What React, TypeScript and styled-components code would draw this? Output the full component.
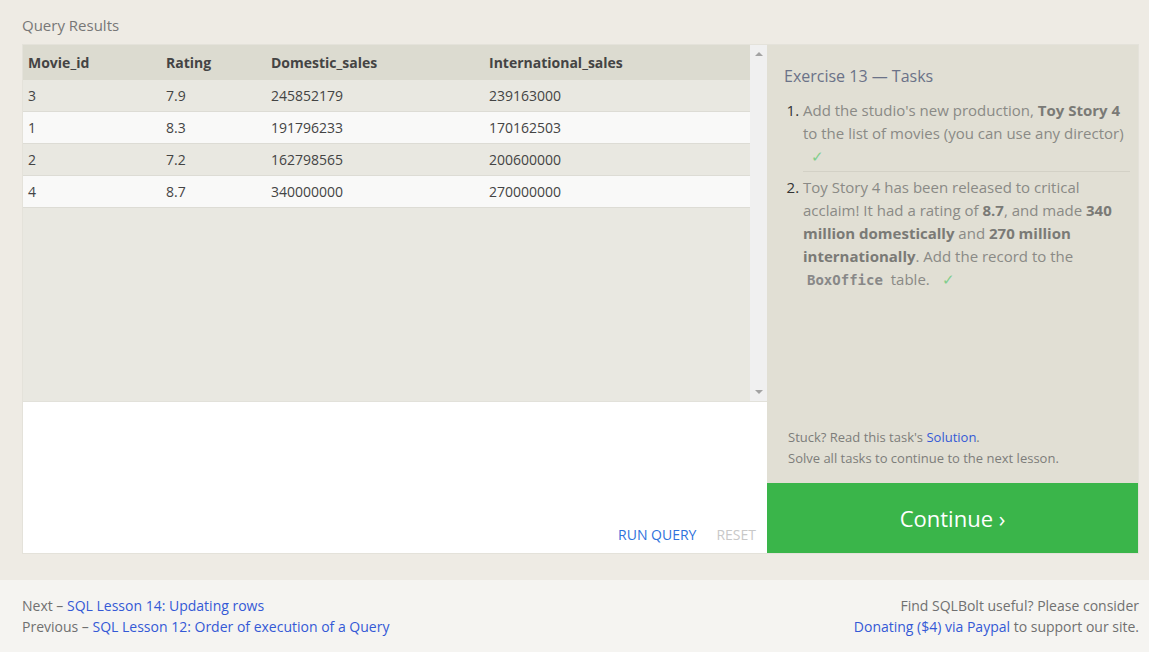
import React from "react";
import styled, { createGlobalStyle } from "styled-components";

const Global = createGlobalStyle`
  html, body { margin: 0; padding: 0; }
  body {
    background: #eeebe4;
    font-family: "Open Sans", "Noto Sans", sans-serif;
    color: #555;
  }
`;

const Page = styled.div`
  display: flex;
  flex-direction: column;
  min-height: 652px;
`;

const Main = styled.main`
  padding: 14px 10px 26px 22px;
`;

const SectionLabel = styled.div`
  font-size: 15px;
  line-height: 22px;
  color: #777;
  margin-bottom: 8px;
`;

const Panel = styled.div`
  display: grid;
  grid-template-columns: 1fr 371px;
  height: 510px;
  border: 1px solid #e4e2da;
  box-sizing: border-box;
`;

const LeftCol = styled.div`
  display: flex;
  flex-direction: column;
  min-width: 0;
`;

const TableArea = styled.div`
  display: flex;
  height: 356px;
  background: #e9e8e1;
`;

const TableScroll = styled.div`
  flex: 1;
  overflow: hidden;
`;

const Table = styled.table`
  width: 100%;
  border-collapse: collapse;
  font-size: 14px;
  table-layout: fixed;
`;

const Th = styled.th<{ $w?: number }>`
  text-align: left;
  font-weight: 700;
  color: #444;
  background: #dcdbd0;
  height: 35px;
  padding: 0 5px;
  width: ${(p) => (p.$w ? `${p.$w}px` : "auto")};
`;

const Tr = styled.tr<{ $alt: boolean }>`
  background: ${(p) => (p.$alt ? "#f9f9f8" : "#e9e8e1")};
  border-bottom: 1px solid #dddcd5;
`;

const Td = styled.td`
  height: 31px;
  padding: 0 5px;
  color: #444;
`;

const Scrollbar = styled.div`
  width: 17px;
  background: #f0f0f0;
  display: flex;
  flex-direction: column;
  justify-content: space-between;
  align-items: center;
  padding: 7px 0;
  box-sizing: border-box;
`;

const Arrow = styled.div<{ $down?: boolean }>`
  width: 0;
  height: 0;
  border-left: 4px solid transparent;
  border-right: 4px solid transparent;
  ${(p) =>
    p.$down
      ? "border-top: 4px solid #a3a3a3;"
      : "border-bottom: 4px solid #a3a3a3;"}
`;

const Editor = styled.div`
  flex: 1;
  background: #fff;
  border-top: 1px solid #e2e1da;
  display: flex;
  align-items: flex-end;
  justify-content: flex-end;
  padding: 0 11px 8px 0;
  gap: 20px;
`;

const EditorButton = styled.span<{ $disabled?: boolean }>`
  font-size: 14px;
  line-height: 20px;
  color: ${(p) => (p.$disabled ? "#c8c8c8" : "#2f72dc")};
  text-transform: uppercase;
`;

const RightCol = styled.div`
  background: #e1dfd4;
  display: flex;
  flex-direction: column;
`;

const Tasks = styled.div`
  flex: 1;
  padding: 20px 8px 0 17px;
  display: flex;
  flex-direction: column;
`;

const TaskTitle = styled.div`
  font-size: 16px;
  line-height: 22px;
  color: #6b7288;
  margin-bottom: 12px;
`;

const TaskList = styled.ol`
  margin: 0;
  padding: 0 0 0 19px;
`;

const TaskItem = styled.li`
  font-size: 15px;
  line-height: 23px;
  color: #8a8a86;
  padding: 0 0 3px 0;
  &::marker { color: #333; }
  & + & { border-top: 1px solid #d3d1c6; padding-top: 4px; }
`;

const B = styled.b`
  color: #7a7a76;
`;

const Code = styled.code`
  font-family: "DejaVu Sans Mono", "Liberation Mono", monospace;
  font-weight: 700;
  color: #888;
  font-size: 14px;
  padding: 0 4px;
`;

const Check = styled.span`
  color: #7fce8c;
  margin-left: 8px;
`;

const Help = styled.div`
  padding: 0 17px 14px 21px;
  font-size: 13px;
  line-height: 21px;
  color: #7d7d7a;
`;

const Link = styled.a`
  color: #3459d6;
  text-decoration: none;
`;

const ContinueButton = styled.div`
  height: 70px;
  background: #3ab54a;
  color: #fff;
  font-size: 22px;
  display: flex;
  align-items: center;
  justify-content: center;
`;

const Footer = styled.footer`
  flex: 1;
  background: #f5f4f1;
  display: flex;
  justify-content: space-between;
  padding: 15px 10px 0 22px;
  font-size: 14px;
  line-height: 21px;
  color: #707070;
`;

const FooterCol = styled.div<{ $right?: boolean }>`
  text-align: ${(p) => (p.$right ? "right" : "left")};
`;

const rows = [
  ["3", "7.9", "245852179", "239163000"],
  ["1", "8.3", "191796233", "170162503"],
  ["2", "7.2", "162798565", "200600000"],
  ["4", "8.7", "340000000", "270000000"],
];

export default function App() {
  return (
    <Page>
      <Global />
      <Main>
        <SectionLabel>Query Results</SectionLabel>
        <Panel>
          <LeftCol>
            <TableArea>
              <TableScroll>
                <Table>
                  <thead>
                    <tr>
                      <Th $w={128}>Movie_id</Th>
                      <Th $w={95}>Rating</Th>
                      <Th $w={208}>Domestic_sales</Th>
                      <Th>International_sales</Th>
                    </tr>
                  </thead>
                  <tbody>
                    {rows.map((r, i) => (
                      <Tr key={i} $alt={i % 2 === 1}>
                        {r.map((c, j) => (
                          <Td key={j}>{c}</Td>
                        ))}
                      </Tr>
                    ))}
                  </tbody>
                </Table>
              </TableScroll>
              <Scrollbar>
                <Arrow />
                <Arrow $down />
              </Scrollbar>
            </TableArea>
            <Editor>
              <EditorButton>Run Query</EditorButton>
              <EditorButton $disabled>Reset</EditorButton>
            </Editor>
          </LeftCol>
          <RightCol>
            <Tasks>
              <TaskTitle>Exercise 13 — Tasks</TaskTitle>
              <TaskList>
                <TaskItem>
                  Add the studio's new production, <B>Toy Story 4</B> to the list of
                  movies (you can use any director) <Check>✓</Check>
                </TaskItem>
                <TaskItem>
                  Toy Story 4 has been released to critical acclaim! It had a rating
                  of <B>8.7</B>, and made <B>340 million domestically</B> and{" "}
                  <B>270 million internationally</B>. Add the record to the{" "}
                  <Code>BoxOffice</Code> table. <Check>✓</Check>
                </TaskItem>
              </TaskList>
            </Tasks>
            <Help>
              Stuck? Read this task's <Link href="#">Solution</Link>.
              <br />
              Solve all tasks to continue to the next lesson.
            </Help>
            <ContinueButton>Continue ›</ContinueButton>
          </RightCol>
        </Panel>
      </Main>
      <Footer>
        <FooterCol>
          Next – <Link href="#">SQL Lesson 14: Updating rows</Link>
          <br />
          Previous – <Link href="#">SQL Lesson 12: Order of execution of a Query</Link>
        </FooterCol>
        <FooterCol $right>
          Find SQLBolt useful? Please consider
          <br />
          <Link href="#">Donating ($4) via Paypal</Link> to support our site.
        </FooterCol>
      </Footer>
    </Page>
  );
}
